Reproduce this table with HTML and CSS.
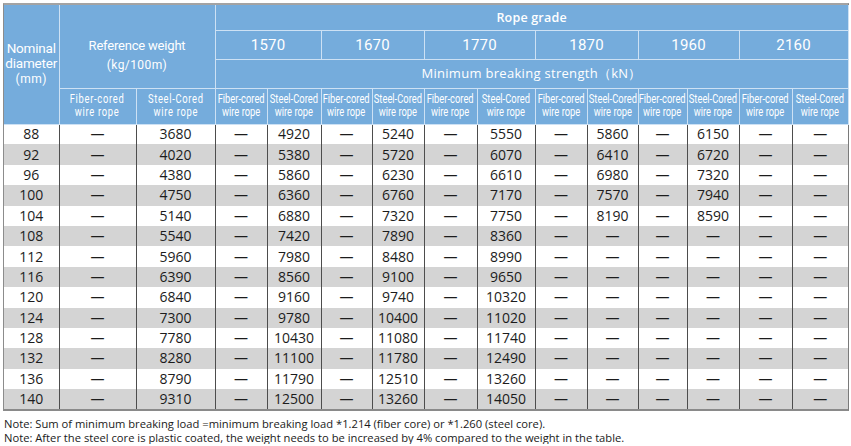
FILE: index.html
```html
<!DOCTYPE html>
<html>
<head>
<meta charset="utf-8">
<link rel="stylesheet" href="styles.css">
</head>
<body>
<div class="wrap">
<table class="spec">
<colgroup>
<col style="width:55px"><col style="width:77px"><col style="width:79px">
<col style="width:52px"><col style="width:54px">
<col style="width:51px"><col style="width:52px">
<col style="width:53px"><col style="width:58px">
<col style="width:52px"><col style="width:51px">
<col style="width:49px"><col style="width:52px">
<col style="width:53px"><col style="width:56px">
</colgroup>
<thead>
<tr class="h1">
<th rowspan="4" class="nom">Nominal<br>diameter<br><small>(mm)</small></th>
<th rowspan="3" colspan="2" class="ref">Reference weight<br><small>(kg/100m)</small></th>
<th colspan="12" class="grade-title">Rope grade</th>
</tr>
<tr class="h2">
<th colspan="2" class="grade">1570</th>
<th colspan="2" class="grade">1670</th>
<th colspan="2" class="grade">1770</th>
<th colspan="2" class="grade">1870</th>
<th colspan="2" class="grade">1960</th>
<th colspan="2" class="grade">2160</th>
</tr>
<tr class="h3">
<th colspan="12" class="mbs">Minimum breaking strength（kN）</th>
</tr>
<tr class="h4">
<th class="sub wide"><span class="cond">Fiber-cored<br>wire rope</span></th>
<th class="sub wide"><span class="cond">Steel-Cored<br>wire rope</span></th>
<th class="sub"><span class="cond">Fiber-cored<br>wire rope</span></th><th class="sub"><span class="cond">Steel-Cored<br>wire rope</span></th>
<th class="sub"><span class="cond">Fiber-cored<br>wire rope</span></th><th class="sub"><span class="cond">Steel-Cored<br>wire rope</span></th>
<th class="sub"><span class="cond">Fiber-cored<br>wire rope</span></th><th class="sub"><span class="cond">Steel-Cored<br>wire rope</span></th>
<th class="sub"><span class="cond">Fiber-cored<br>wire rope</span></th><th class="sub"><span class="cond">Steel-Cored<br>wire rope</span></th>
<th class="sub"><span class="cond">Fiber-cored<br>wire rope</span></th><th class="sub"><span class="cond">Steel-Cored<br>wire rope</span></th>
<th class="sub"><span class="cond">Fiber-cored<br>wire rope</span></th><th class="sub"><span class="cond">Steel-Cored<br>wire rope</span></th>
</tr>
</thead>
<tbody>
<tr><td>88</td><td>—</td><td>3680</td><td>—</td><td>4920</td><td>—</td><td>5240</td><td>—</td><td>5550</td><td>—</td><td>5860</td><td>—</td><td>6150</td><td>—</td><td>—</td></tr>
<tr><td>92</td><td>—</td><td>4020</td><td>—</td><td>5380</td><td>—</td><td>5720</td><td>—</td><td>6070</td><td>—</td><td>6410</td><td>—</td><td>6720</td><td>—</td><td>—</td></tr>
<tr><td>96</td><td>—</td><td>4380</td><td>—</td><td>5860</td><td>—</td><td>6230</td><td>—</td><td>6610</td><td>—</td><td>6980</td><td>—</td><td>7320</td><td>—</td><td>—</td></tr>
<tr><td>100</td><td>—</td><td>4750</td><td>—</td><td>6360</td><td>—</td><td>6760</td><td>—</td><td>7170</td><td>—</td><td>7570</td><td>—</td><td>7940</td><td>—</td><td>—</td></tr>
<tr><td>104</td><td>—</td><td>5140</td><td>—</td><td>6880</td><td>—</td><td>7320</td><td>—</td><td>7750</td><td>—</td><td>8190</td><td>—</td><td>8590</td><td>—</td><td>—</td></tr>
<tr><td>108</td><td>—</td><td>5540</td><td>—</td><td>7420</td><td>—</td><td>7890</td><td>—</td><td>8360</td><td>—</td><td>—</td><td>—</td><td>—</td><td>—</td><td>—</td></tr>
<tr><td>112</td><td>—</td><td>5960</td><td>—</td><td>7980</td><td>—</td><td>8480</td><td>—</td><td>8990</td><td>—</td><td>—</td><td>—</td><td>—</td><td>—</td><td>—</td></tr>
<tr><td>116</td><td>—</td><td>6390</td><td>—</td><td>8560</td><td>—</td><td>9100</td><td>—</td><td>9650</td><td>—</td><td>—</td><td>—</td><td>—</td><td>—</td><td>—</td></tr>
<tr><td>120</td><td>—</td><td>6840</td><td>—</td><td>9160</td><td>—</td><td>9740</td><td>—</td><td>10320</td><td>—</td><td>—</td><td>—</td><td>—</td><td>—</td><td>—</td></tr>
<tr><td>124</td><td>—</td><td>7300</td><td>—</td><td>9780</td><td>—</td><td>10400</td><td>—</td><td>11020</td><td>—</td><td>—</td><td>—</td><td>—</td><td>—</td><td>—</td></tr>
<tr><td>128</td><td>—</td><td>7780</td><td>—</td><td>10430</td><td>—</td><td>11080</td><td>—</td><td>11740</td><td>—</td><td>—</td><td>—</td><td>—</td><td>—</td><td>—</td></tr>
<tr><td>132</td><td>—</td><td>8280</td><td>—</td><td>11100</td><td>—</td><td>11780</td><td>—</td><td>12490</td><td>—</td><td>—</td><td>—</td><td>—</td><td>—</td><td>—</td></tr>
<tr><td>136</td><td>—</td><td>8790</td><td>—</td><td>11790</td><td>—</td><td>12510</td><td>—</td><td>13260</td><td>—</td><td>—</td><td>—</td><td>—</td><td>—</td><td>—</td></tr>
<tr><td>140</td><td>—</td><td>9310</td><td>—</td><td>12500</td><td>—</td><td>13260</td><td>—</td><td>14050</td><td>—</td><td>—</td><td>—</td><td>—</td><td>—</td><td>—</td></tr>
</tbody>
</table>
</div>
<div class="notes">
<p>Note: Sum of minimum breaking load =minimum breaking load *1.214 (fiber core) or *1.260 (steel core).</p>
<p>Note: After the steel core is plastic coated, the weight needs to be increased by 4% compared to the weight in the table.</p>
</div>
</body>
</html>
```

FILE: styles.css
```css
html, body {
  margin: 0;
  padding: 0;
  background: #ffffff;
}
body {
  padding: 3px 0 0 3px;
  font-family: "Open Sans", "DejaVu Sans", sans-serif;
}
.wrap {
  width: 844px;
  border-top: 2px solid #a3a3a3;
  border-left: 1px solid #8c8c8c;
  border-right: 1px solid #7a7a7a;
  border-bottom: 2px solid #8a8a8a;
}
.spec {
  width: 844px;
  table-layout: fixed;
  border-collapse: collapse;
}
.spec th {
  background: #75acdc;
  color: #ffffff;
  font-weight: normal;
  padding: 0;
  text-align: center;
  vertical-align: middle;
  border: 1px solid #cde1f4;
  white-space: nowrap;
}
.spec thead tr:first-child th { border-top: none; }
.spec th:first-child { border-left: none; }
.h1 { height: 25px; }
.h2 { height: 29px; }
.h3 { height: 29px; }
.h4 { height: 36px; }
.nom {
  font-family: Roboto, "Open Sans", sans-serif;
  font-size: 13.5px;
  line-height: 15px;
  letter-spacing: -0.2px;
}
.nom small {
  font-size: 12px;
  letter-spacing: 0.5px;
}
.spec th.ref {
  font-family: Roboto, "Open Sans", sans-serif;
  font-size: 13px;
  line-height: 19px;
  letter-spacing: -0.2px;
  padding-top: 18px;
}
.ref small {
  font-size: 12px;
  letter-spacing: 0.4px;
}
.grade-title {
  font-size: 12.5px;
  font-weight: 600 !important;
  letter-spacing: 0.2px;
}
.grade {
  font-family: Roboto, "Open Sans", sans-serif;
  font-size: 15px;
  letter-spacing: 0.2px;
}
.mbs {
  font-size: 13px;
  letter-spacing: 0.3px;
  font-weight: 500 !important;
}
.sub {
  font-family: Roboto, "Open Sans", sans-serif;
  font-size: 12px;
  line-height: 13px;
}
.cond {
  display: inline-block;
  transform: scaleX(0.78);
  transform-origin: center;
  margin: 0 -14px;
}
.sub.wide .cond {
  letter-spacing: 0.9px;
}
.spec tbody tr { height: 20.4px; }
.spec tbody tr:nth-child(even) td { background: #d4d4d4; }
.spec td {
  padding: 0;
  text-align: center;
  vertical-align: middle;
  font-size: 14px;
  line-height: 18px;
  color: #1c1c1c;
  border-left: 1px solid #4d4d4d;
  border-right: 1px solid #4d4d4d;
}
.spec td:first-child { border-left: none; }
.spec td:last-child { border-right: none; }
.notes {
  margin-top: 6px;
  padding-left: 1px;
  font-size: 11.2px;
  line-height: 13.5px;
  color: #1a1a1a;
}
.notes p { margin: 0; }
```
